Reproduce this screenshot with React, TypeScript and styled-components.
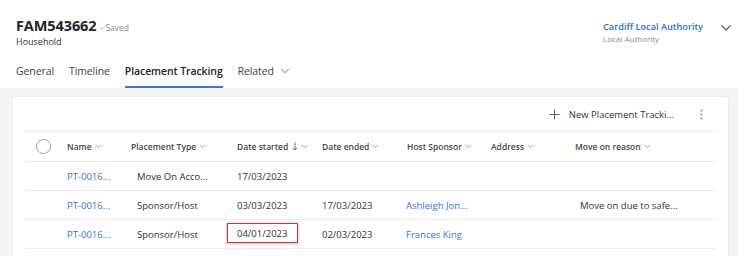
import React, { ReactElement } from 'react';
import styled, { createGlobalStyle } from 'styled-components';

const GlobalStyle = createGlobalStyle`
  html, body {
    margin: 0;
    padding: 0;
    background: #ffffff;
    font-family: 'Open Sans', 'Noto Sans', Arial, sans-serif;
    color: #323130;
  }
`;

type Row = {
  name: string;
  type: string;
  started: string;
  ended: string;
  host: string;
  address: string;
  reason: string;
  flagged?: boolean;
};

const rows: Row[] = [
  { name: 'PT-0016...', type: 'Move On Acco...', started: '17/03/2023', ended: '', host: '', address: '', reason: '' },
  { name: 'PT-0016...', type: 'Sponsor/Host', started: '03/03/2023', ended: '17/03/2023', host: 'Ashleigh Jon...', address: '', reason: 'Move on due to safe...' },
  { name: 'PT-0016...', type: 'Sponsor/Host', started: '04/01/2023', ended: '02/03/2023', host: 'Frances King', address: '', reason: '', flagged: true },
];

const Chevron = ({ size = 8, weight = 1.1 }: { size?: number; weight?: number }): ReactElement => (
  <svg width={size} height={size} viewBox="0 0 10 10" fill="none">
    <path d="M1.5 3.2 L5 6.7 L8.5 3.2" stroke="currentColor" strokeWidth={weight} strokeLinecap="round" strokeLinejoin="round" />
  </svg>
);

const App: React.FC = (): ReactElement => (
  <>
    <GlobalStyle />
    <Page>
      <Header>
        <TitleBar>
          <TitleBlock>
            <TitleLine>
              <Title>FAM543662</Title>
              <Status>- Saved</Status>
            </TitleLine>
            <Subtitle>Household</Subtitle>
          </TitleBlock>
          <OwnerBlock>
            <OwnerText>
              <OwnerName>Cardiff Local Authority</OwnerName>
              <OwnerRole>Local Authority</OwnerRole>
            </OwnerText>
            <OwnerToggle>
              <Chevron size={12} />
            </OwnerToggle>
          </OwnerBlock>
        </TitleBar>
        <Tabs>
          <Tab>General</Tab>
          <Tab>Timeline</Tab>
          <Tab active>Placement Tracking</Tab>
          <Tab>
            Related
            <TabChevron>
              <Chevron size={10} weight={0.9} />
            </TabChevron>
          </Tab>
        </Tabs>
      </Header>
      <Content>
        <Card>
          <Toolbar>
            <NewButton>
              <svg width="11" height="11" viewBox="0 0 11 11">
                <path d="M5.5 0.5 V10.5 M0.5 5.5 H10.5" stroke="#605e5c" strokeWidth="1" />
              </svg>
              New Placement Tracki...
            </NewButton>
            <More>
              <svg width="3" height="11" viewBox="0 0 3 11">
                <circle cx="1.5" cy="1.5" r="1" fill="#8a8886" />
                <circle cx="1.5" cy="5.5" r="1" fill="#8a8886" />
                <circle cx="1.5" cy="9.5" r="1" fill="#8a8886" />
              </svg>
            </More>
          </Toolbar>
          <Grid>
            <HeadRow>
              <CheckCell>
                <RoundCheck />
              </CheckCell>
              <HeadCell>Name<HeadChevron><Chevron size={7} /></HeadChevron></HeadCell>
              <HeadCell>Placement Type<HeadChevron><Chevron size={7} /></HeadChevron></HeadCell>
              <HeadCell>
                Date started
                <SortArrow>
                  <svg width="6" height="9" viewBox="0 0 6 9">
                    <path d="M3 0.5 V8 M0.8 5.8 L3 8 L5.2 5.8" stroke="#605e5c" strokeWidth="0.9" fill="none" />
                  </svg>
                </SortArrow>
                <HeadChevron><Chevron size={7} /></HeadChevron>
              </HeadCell>
              <HeadCell>Date ended<HeadChevron><Chevron size={7} /></HeadChevron></HeadCell>
              <HeadCell>Host Sponsor<HeadChevron><Chevron size={7} /></HeadChevron></HeadCell>
              <HeadCell>Address<HeadChevron><Chevron size={7} /></HeadChevron></HeadCell>
              <HeadCell>Move on reason<HeadChevron><Chevron size={7} /></HeadChevron></HeadCell>
            </HeadRow>
            {rows.map((row, i) => (
              <DataRow key={i}>
                <CheckCell />
                <Cell link>{row.name}</Cell>
                <Cell indent={6}>{row.type}</Cell>
                <Cell>{row.flagged ? <Flagged>{row.started}</Flagged> : row.started}</Cell>
                <Cell>{row.ended}</Cell>
                <Cell link indent={-1}>{row.host}</Cell>
                <Cell>{row.address}</Cell>
                <Cell indent={5}>{row.reason}</Cell>
              </DataRow>
            ))}
          </Grid>
        </Card>
      </Content>
    </Page>
  </>
);

const Page = styled.div`
  width: 750px;
  height: 256px;
  overflow: hidden;
  display: flex;
  flex-direction: column;
  background: #ffffff;
`;

const Header = styled.div`
  padding: 17px 0 0 16px;
  background: #ffffff;
`;

const TitleBar = styled.div`
  display: flex;
  justify-content: space-between;
  align-items: flex-start;
`;

const TitleBlock = styled.div`
  display: flex;
  flex-direction: column;
`;

const TitleLine = styled.div`
  display: flex;
  align-items: baseline;
  gap: 4px;
`;

const Title = styled.span`
  font-size: 14.5px;
  font-weight: 700;
  line-height: 18px;
  color: #242424;
  letter-spacing: -0.1px;
`;

const Status = styled.span`
  font-size: 8.5px;
  color: #8a8886;
`;

const Subtitle = styled.span`
  font-size: 9px;
  line-height: 14px;
  color: #323130;
`;

const OwnerBlock = styled.div`
  display: flex;
  align-items: flex-start;
  gap: 17px;
  padding: 3px 18px 0 0;
`;

const OwnerText = styled.div`
  display: flex;
  flex-direction: column;
`;

const OwnerName = styled.span`
  font-size: 9.2px;
  font-weight: 600;
  line-height: 13px;
  color: #2f6fd6;
`;

const OwnerRole = styled.span`
  font-size: 8px;
  line-height: 11px;
  color: #8a8886;
`;

const OwnerToggle = styled.span`
  display: flex;
  color: #605e5c;
  padding-top: 2px;
`;

const Tabs = styled.div`
  display: flex;
  gap: 15px;
  margin-top: 10px;
`;

const Tab = styled.div<{ active?: boolean }>`
  display: flex;
  align-items: center;
  box-sizing: border-box;
  height: 29px;
  padding-bottom: 3px;
  font-size: 10.5px;
  letter-spacing: -0.1px;
  font-weight: ${({ active }) => (active ? 600 : 400)};
  color: ${({ active }) => (active ? '#242424' : '#424242')};
  border-bottom: 2px solid ${({ active }) => (active ? '#3b74df' : 'transparent')};
`;

const TabChevron = styled.span`
  display: flex;
  margin-left: 6px;
  color: #605e5c;
`;

const Content = styled.div`
  flex: 1;
  width: 738px;
  background: #f5f4f3;
  padding: 9px 0 0 13px;
  box-sizing: border-box;
`;

const Card = styled.div`
  width: 715px;
  height: 100%;
  background: #ffffff;
  box-shadow: 0 0 2px rgba(0, 0, 0, 0.12);
  border-radius: 2px 2px 0 0;
  padding: 0 11px 0 12px;
  box-sizing: border-box;
`;

const Toolbar = styled.div`
  display: flex;
  justify-content: flex-end;
  align-items: center;
  height: 34px;
  border-bottom: 1px solid #edebe9;
`;

const NewButton = styled.div`
  display: flex;
  align-items: center;
  gap: 9px;
  font-size: 9.5px;
  color: #323130;
`;

const More = styled.div`
  display: flex;
  margin: 0 14px 0 26px;
`;

const Grid = styled.div`
  display: flex;
  flex-direction: column;
`;

const columns = '35px 64px 106px 85px 85px 84px 84px 1fr';

const HeadRow = styled.div`
  display: grid;
  grid-template-columns: ${columns};
  height: 29px;
  align-items: center;
  border-bottom: 1px solid #edebe9;
`;

const DataRow = styled.div`
  display: grid;
  grid-template-columns: ${columns};
  height: 28px;
  align-items: center;
  border-bottom: 1px solid #edebe9;
`;

const CheckCell = styled.div`
  display: flex;
  align-items: center;
  padding-left: 11px;
`;

const RoundCheck = styled.span`
  width: 13px;
  height: 13px;
  border: 1px solid #a19f9d;
  border-radius: 50%;
`;

const HeadCell = styled.div`
  display: flex;
  align-items: center;
  padding-left: 7px;
  font-size: 8.5px;
  font-weight: 600;
  color: #484644;
  white-space: nowrap;
`;

const HeadChevron = styled.span`
  display: flex;
  margin-left: 3px;
  color: #8a8886;
`;

const SortArrow = styled.span`
  display: flex;
  margin-left: 4px;
`;

const Cell = styled.div<{ link?: boolean; indent?: number }>`
  padding-left: ${({ indent = 0 }) => 7 + indent}px;
  font-size: 9.5px;
  color: ${({ link }) => (link ? '#3075d0' : '#323130')};
  white-space: nowrap;
`;

const Flagged = styled.span`
  display: inline-flex;
  align-items: center;
  height: 18px;
  margin: -2px 0 0 -10px;
  padding: 0 10px 0 9px;
  border: 1px solid #e8262a;
  box-shadow: 0 1px 3px rgba(0, 0, 0, 0.25);
`;

export default App;
